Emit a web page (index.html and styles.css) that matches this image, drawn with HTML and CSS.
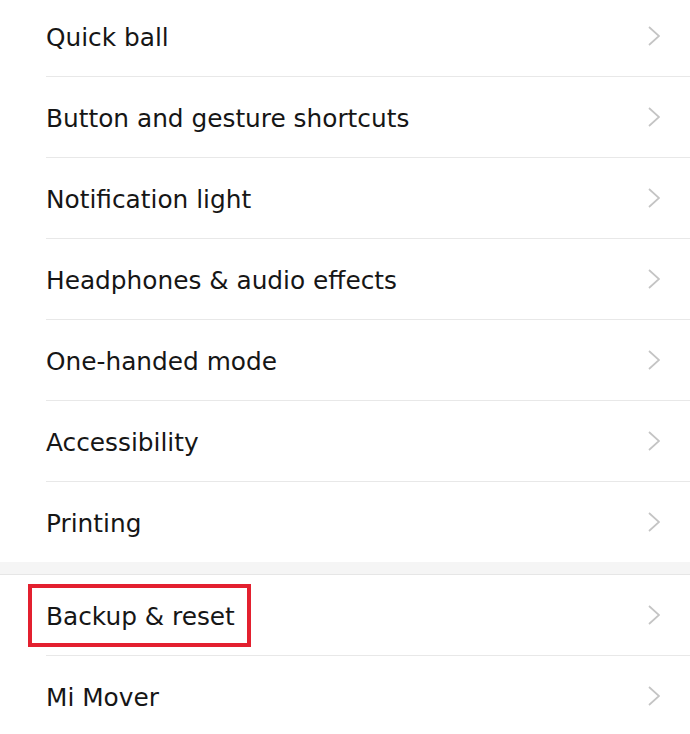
FILE: index.html
```html
<!DOCTYPE html>
<html>
<head>
<meta charset="utf-8">
<link rel="stylesheet" href="styles.css">
</head>
<body>
<div class="screen">
  <div class="group first">
    <div class="row"><span class="label">Quick ball</span><svg class="chev" viewBox="0 0 12 20"><path d="M1 1 L11 10 L1 19"/></svg></div>
    <div class="row"><span class="label">Button and gesture shortcuts</span><svg class="chev" viewBox="0 0 12 20"><path d="M1 1 L11 10 L1 19"/></svg></div>
    <div class="row"><span class="label">Notification light</span><svg class="chev" viewBox="0 0 12 20"><path d="M1 1 L11 10 L1 19"/></svg></div>
    <div class="row"><span class="label">Headphones &amp; audio effects</span><svg class="chev" viewBox="0 0 12 20"><path d="M1 1 L11 10 L1 19"/></svg></div>
    <div class="row"><span class="label">One-handed mode</span><svg class="chev" viewBox="0 0 12 20"><path d="M1 1 L11 10 L1 19"/></svg></div>
    <div class="row"><span class="label">Accessibility</span><svg class="chev" viewBox="0 0 12 20"><path d="M1 1 L11 10 L1 19"/></svg></div>
    <div class="row last"><span class="label">Printing</span><svg class="chev" viewBox="0 0 12 20"><path d="M1 1 L11 10 L1 19"/></svg></div>
  </div>
  <div class="gap"></div>
  <div class="group">
    <div class="row"><span class="label">Backup &amp; reset</span><div class="highlight"></div><svg class="chev" viewBox="0 0 12 20"><path d="M1 1 L11 10 L1 19"/></svg></div>
    <div class="row last"><span class="label">Mi Mover</span><svg class="chev" viewBox="0 0 12 20"><path d="M1 1 L11 10 L1 19"/></svg></div>
  </div>
</div>
</body>
</html>
```
FILE: styles.css
```css
html, body {
  margin: 0;
  padding: 0;
  background: #ffffff;
}
.screen {
  width: 690px;
  height: 734px;
  overflow: hidden;
  font-family: "DejaVu Sans", Roboto, sans-serif;
}
.group {
  padding-left: 46px;
}
.group.first {
  margin-top: -4px;
}
.row {
  position: relative;
  height: 80px;
  display: flex;
  align-items: center;
  border-bottom: 1px solid #e8e8e8;
}
.row.last {
  border-bottom: none;
}
.label {
  flex: 1;
  font-size: 24.8px;
  color: #161616;
  padding-top: 3px;
}
.chev {
  width: 12px;
  height: 20px;
  margin-right: 30px;
  fill: none;
  stroke: #c4c4c4;
  stroke-width: 1.7;
}
.gap {
  height: 12px;
  background: #f5f5f5;
  border-bottom: 1px solid #e6e6e6;
}
.highlight {
  position: absolute;
  left: -18px;
  top: 9px;
  width: 223px;
  height: 63px;
  box-sizing: border-box;
  border: 4px solid #e3202f;
}
```
